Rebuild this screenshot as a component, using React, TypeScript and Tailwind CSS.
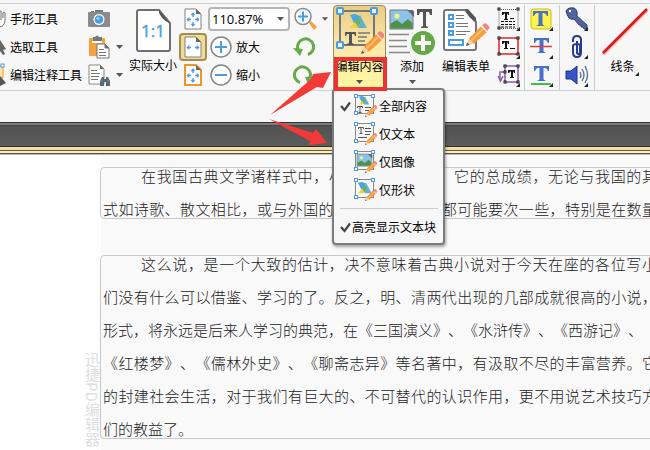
import type { ReactNode } from "react";
import { twMerge } from "tailwind-merge";

const BLUE = "#4a9be0";
const GREY = "#707070";

function Caret({ className = "" }: { className?: string }) {
  return (
    <svg viewBox="0 0 7 4" className={twMerge("w-[7px] h-1 shrink-0", className)}>
      <path d="M0 0h7L3.5 4z" fill="#555" />
    </svg>
  );
}

function Corner({ children }: { children: ReactNode }) {
  return (
    <svg viewBox="0 0 24 26" className="w-6 h-[26px]">
      {children}
      <path d="M23 21v4h-4z" fill="#222" />
    </svg>
  );
}

function Pencil() {
  return (
    <g>
      <path d="M0 20l2.5-6.5 4.5 4.5z" fill="#f3d3b0" />
      <path d="M0 20l1-3 2 2z" fill="#555" />
      <path d="M2.5 13.5L13 3l5 5L7 18z" fill="#f89b3c" />
      <path d="M4.5 15.5L15 5" stroke="#fdbb70" strokeWidth="1.6" />
      <path d="M14 2l2-1.6q1-.6 2 .2L20 3q1 1 0 2l-1.5 2z" fill="#f2837a" />
    </g>
  );
}

function Shapes() {
  return (
    <g>
      <path d="M0 1l5-1 5 2-1 6-5 1z" fill="#4aa5e0" />
      <path d="M10 1l7 13H8z" fill="#5bb3d9" />
      <path d="M0 14l6-7 4 3-3 4z" fill="#f2cf4a" />
      <path d="M5 8l4-4 2 3-3 6z" fill="#6fae55" />
    </g>
  );
}

function Picture() {
  return (
    <g>
      <path d="M0 0h18l5 5v14H0z" fill="#8bc4ea" stroke="#777" />
      <circle cx="7" cy="6" r="2.5" fill="#fff27a" />
      <path d="M.5 18.500v-5L7 10l5 4 6-5 4.500 4v5.500z" fill="#4f9149" />
      <path d="M17 0l7 7v-5q0-2-2-2z" fill="#666" />
    </g>
  );
}

function Handles() {
  return (
    <g fill="#fff" stroke={BLUE}>
      <rect x="2.500" y="2.500" width="18" height="18" fill="none" stroke="#888" />
      <rect x="1.500" y="1.500" width="3" height="3" />
      <rect x="18.500" y="1.500" width="3" height="3" />
      <rect x="1.500" y="18.500" width="3" height="3" />
    </g>
  );
}

function EditContentIcon() {
  return (
    <svg viewBox="0 0 48 50" className="w-12 h-[50px]">
      <g transform="translate(1 2)">
        <path d="M3 3h34v34H3z" fill="none" stroke="#777" strokeWidth="2" />
        <g fill="#e5f2fb" stroke={BLUE} strokeWidth="2">
          <rect x="0" y="0" width="6" height="6" rx="1" />
          <rect x="34" y="0" width="6" height="6" rx="1" />
          <rect x="0" y="34" width="6" height="6" rx="1" />
        </g>
        <g transform="translate(13 6)"><Shapes /></g>
        <path d="M8 24h11v4h-1l-1-2h-2v9l2 1v1h-7v-1l2-1v-9h-2l-1 2H8z" fill="#555" />
        <path d="M21 25h12M21 29h9M21 33h7" stroke="#777" strokeWidth="1.500" />
        <g transform="translate(24 23) scale(1.150)"><Pencil /></g>
      </g>
    </svg>
  );
}

function MenuIcon({ kind }: { kind: string }) {
  return (
    <svg viewBox="0 0 24 26" className="w-6 h-[26px]">
      <Handles />
      {kind === "all" && <g transform="translate(6 3) scale(.6)"><Shapes /></g>}
      {kind === "shape" && <g transform="translate(5 5) scale(.8)"><Shapes /></g>}
      {kind === "image" && <g transform="translate(4 5) scale(.64)"><Picture /></g>}
      {kind === "all" && (
        <path d="M4.500 15v-1.500h5V15M7 13.500V19M5.500 19.500h3M12 14.500h6M12 17.500h4" stroke="#555" fill="none" />
      )}
      {kind === "text" && (
        <path d="M5.500 8V6.500h5V8M8 6.500V12M6.500 12.500h3M12 7.500h6M12 10.500h6M12 13.500h5M5 16.500h9" stroke="#555" fill="none" />
      )}
      <g transform="translate(12 12) scale(.6)"><Pencil /></g>
    </svg>
  );
}

function PageArrows({ kind }: { kind: string }) {
  return (
    <svg viewBox="0 0 18 22" className="w-[18px] h-[22px]">
      <path d="M1 1h11l5 5v15H1z" fill="#fff" stroke={kind === "orange" ? "#ee9530" : "#808080"} strokeWidth={kind === "orange" ? 2 : 1} />
      <path d="M12 1v5h5z" fill="#666" />
      <g stroke={BLUE} strokeWidth="1.300" fill={BLUE}>
        <path d="M3 11.500h4M11 11.500h4" />
        <path d="M5 9.500v4l-2-2zM13 9.500v4l2-2z" strokeWidth=".5" />
        {kind !== "width" && (
          <>
            <path d="M9 5v4M9 14v4" />
            <path d="M7 7h4L9 4.500zM7 16h4l-2 2.500z" strokeWidth=".5" />
          </>
        )}
      </g>
    </svg>
  );
}

function RoundIcon({ plus }: { plus?: boolean }) {
  return (
    <svg viewBox="0 0 22 22" className="w-[22px] h-[22px]">
      <circle cx="11" cy="11" r="10" fill="#fdfdfd" stroke="#858585" strokeWidth="1.500" />
      <path d={plus ? "M5 11h12M11 5v12" : "M5 11h12"} stroke={BLUE} strokeWidth="2" />
    </svg>
  );
}

function Rotate({ flip }: { flip?: boolean }) {
  return (
    <svg viewBox="0 0 22 20" className="w-[22px] h-5">
      <g transform={flip ? "translate(22 0) scale(-1 1)" : undefined}>
        <path d="M15 17.500A8 8 0 1 0 5 12.500" fill="none" stroke="#68a948" strokeWidth="3" />
        <path d="M0 11l10 1-3 7z" fill="#68a948" />
      </g>
    </svg>
  );
}

function LeftTools() {
  const label = "flex items-center h-7 gap-1 whitespace-nowrap";
  return (
    <div className="w-[86px] shrink-0">
      <button className={label}>
        <svg viewBox="0 0 6 24" className="w-[6px] h-6">
          <path d="M-1 4h2v9M3 11V6q0-2 2 0v8q-1 6-6 6" fill="#fff" stroke={GREY} />
        </svg>
        手形工具
      </button>
      <button className={label}>
        <svg viewBox="0 0 6 24" className="w-[6px] h-6"><path d="M0 5l6 9-3 1 2 4-2 1-3-4z" fill="#666" /></svg>
        选取工具
      </button>
      <button className={label}>
        <svg viewBox="0 0 6 24" className="w-[6px] h-6">
          <path d="M0 3h3v12H0" fill="#ffe6a1" stroke="#ee9530" />
          <rect x="1" y="1" width="3" height="3" fill="#fff" stroke={BLUE} />
          <path d="M0 13l6 7-6 3z" fill="#555" />
        </svg>
        编辑注释工具
      </button>
    </div>
  );
}

function ClipTools() {
  return (
    <div className="w-[42px] shrink-0 pl-[2px]">
      <button aria-label="快照" className="flex items-center h-7">
        <svg viewBox="0 0 22 18" className="w-[22px] h-[18px]">
          <path d="M3 1h3v2H3zM7 0h8v4H7z" fill="#777" />
          <rect y="2" width="22" height="15" rx="1" fill="#8a8a8a" />
          <circle cx="11" cy="9.500" r="5.500" fill="#fff" />
          <circle cx="11" cy="9.500" r="4.300" fill={BLUE} />
          <circle cx="10" cy="8.500" r="1.800" fill="#8cc8f5" />
        </svg>
      </button>
      <button aria-label="粘贴" className="flex items-center h-7 gap-[6px]">
        <svg viewBox="0 0 22 24" className="w-[22px] h-6">
          <rect x="1" y="3" width="16" height="18" rx="1" fill="#f5a13d" />
          <path d="M5 2h2q2-3 4 0h3v4H5z" fill="#777" />
          <rect x="4" y="6" width="10" height="2" fill="#fff" />
          <path d="M9 9h8l4 4v10H9z" fill="#fff" stroke="#777" />
          <path d="M17 9v4h4zM11 14.500h5M11 17.500h7M11 20.500h7" stroke="#777" fill="#666" />
        </svg>
        <Caret />
      </button>
      <button aria-label="查找" className="flex items-center h-7 gap-[6px]">
        <svg viewBox="0 0 22 24" className="w-[22px] h-6">
          <path d="M1 2h11l4 4v15H1z" fill="#fff" stroke="#888" />
          <path d="M12 2v4h4z" fill="#666" />
          <path d="M3 7.500h6M3 10.500h9M3 13.500h8M3 16.500h7" stroke="#777" />
          <path d="M12 23v-5l2-4h2v2h2v-2h2l2 4v5h-4v-4h-2v4z" fill="#5b6670" />
          <path d="M13 18h2M19 18h2" stroke={BLUE} />
        </svg>
        <Caret />
      </button>
    </div>
  );
}

function ZoomTools() {
  return (
    <>
      <button className="w-[50px] shrink-0 flex flex-col items-center pt-1 gap-1 whitespace-nowrap">
        <svg viewBox="0 0 35 44" className="w-[35px] h-11">
          <path d="M3 1h20l11 13v26q0 2-2 2H3q-2 0-2-2V3q0-2 2-2z" fill="#fff" stroke="#707070" strokeWidth="2" />
          <path d="M23 1v3q4 8 11 10z" fill="#555" />
          <text x="17" y="28" textAnchor="middle" fontSize="17" fill={BLUE} stroke={BLUE} strokeWidth=".4" fontFamily="Open Sans, sans-serif">1:1</text>
        </svg>
        实际大小
      </button>
      <div className="w-[30px] shrink-0 flex flex-col items-center">
        <button aria-label="适合页面" className="flex items-center justify-center h-7"><PageArrows kind="page" /></button>
        <button aria-label="适合宽度" className="flex items-center justify-center h-7 w-7 border-2 border-[#a38d56] rounded-sm bg-[#f1dc91]"><PageArrows kind="width" /></button>
        <button aria-label="适合可见" className="flex items-center justify-center h-7"><PageArrows kind="orange" /></button>
      </div>
      <div className="w-[125px] shrink-0">
        <div className="flex items-center h-7 gap-1">
          <div className="relative flex items-center">
            <select aria-label="缩放比例" className="appearance-none w-[82px] h-6 pl-[2px] bg-white border-2 border-[#b5b5b5] rounded-sm text-[13px] leading-5 font-['Open_Sans',sans-serif]">
              <option>110.87%</option>
            </select>
            <Caret className="absolute right-[6px] pointer-events-none" />
          </div>
          <button aria-label="缩放" className="flex items-center gap-[5px]">
            <svg viewBox="0 0 23 24" className="w-[23px] h-6">
              <path d="M15 16l2-2 6 6-3 3z" fill="#f5a13d" />
              <circle cx="9" cy="9.500" r="8" fill="#f5fbff" stroke="#888" strokeWidth="1.500" />
              <path d="M4 9.500h10M9 4.500v10" stroke={BLUE} strokeWidth="2" />
            </svg>
            <Caret className="w-[6px]" />
          </button>
        </div>
        <div className="flex items-center h-7 pl-[2px]">
          <button className="flex items-center gap-1 w-[83px] whitespace-nowrap"><RoundIcon plus />放大</button>
          <button aria-label="逆时针旋转"><Rotate /></button>
        </div>
        <div className="flex items-center h-7 pl-[2px]">
          <button className="flex items-center gap-1 w-[83px] whitespace-nowrap"><RoundIcon />缩小</button>
          <button aria-label="顺时针旋转"><Rotate flip /></button>
        </div>
      </div>
    </>
  );
}

function Check() {
  return (
    <svg viewBox="0 0 11 11" className="w-[11px] h-[11px] shrink-0">
      <path d="M1 5l3.500 4L10 1.500" fill="none" stroke="#444" strokeWidth="2.200" />
    </svg>
  );
}

const menuItems = [
  { kind: "all", label: "全部内容", checked: true },
  { kind: "text", label: "仅文本" },
  { kind: "image", label: "仅图像" },
  { kind: "shape", label: "仅形状" },
];

function EditContent() {
  return (
    <div className="relative w-[53px] shrink-0">
      <button className="w-full h-[85px] flex flex-col items-center border border-[#9b8a58] rounded-t-sm bg-linear-to-b from-[#e9cd85] via-[#fbe9ac] to-[#fff6a0] whitespace-nowrap">
        <EditContentIcon />
        <span className="leading-5">编辑内容</span>
        <Caret className="mt-1" />
      </button>
      <div className="absolute z-20 left-px top-[52px] w-[53px] h-[34px] border-4 border-[#ee3232] pointer-events-none" />
      <div role="menu" className="absolute z-10 -left-px top-[83px] w-[113px] bg-[#f7f7f7] border-2 border-[#7b7b7b] rounded-sm py-[2px] shadow-[1px_2px_3px_rgba(0,0,0,0.35)]">
        {menuItems.map((item) => (
          <button key={item.kind} role="menuitem" className="flex items-center w-full h-7 pl-[6px] gap-[2px] whitespace-nowrap">
            <span className="w-[11px]">{item.checked && <Check />}</span>
            <MenuIcon kind={item.kind} />
            {item.label}
          </button>
        ))}
        <hr className="ml-[6px] mr-[5px] my-1 border-[#ccc]" />
        <button role="menuitem" className="flex items-center w-full h-7 pl-[6px] gap-px whitespace-nowrap">
          <Check />
          高亮显示文本块
        </button>
      </div>
    </div>
  );
}

function BigButtons() {
  return (
    <>
      <button className="w-[52px] shrink-0 flex flex-col items-center whitespace-nowrap">
        <svg viewBox="0 0 46 51" className="w-[46px] h-[51px]">
          <g transform="translate(1 5)"><Picture /></g>
          <path d="M28 4h15v6h-2l-1-3h-3v14l2 1v1h-7v-1l2-1V7h-3l-1 3h-2z" fill="#555" />
          <path d="M0 29.500h20M0 35.500h18M0 41.500h18M0 47.500h21" stroke="#888" strokeWidth="1.500" />
          <circle cx="34" cy="38" r="12" fill="#63aa45" />
          <path d="M26 38h16M34 30v16" stroke="#fff" strokeWidth="4" />
        </svg>
        <span className="leading-5">添加</span>
        <Caret className="mt-1" />
      </button>
      <button className="w-[56px] shrink-0 flex flex-col items-center whitespace-nowrap">
        <svg viewBox="0 0 48 51" className="w-12 h-[51px]">
          <path d="M4 5h19l11 12v26q0 2-2 2H4q-2 0-2-2V7q0-2 2-2z" fill="#fff" stroke="#777" strokeWidth="2" />
          <path d="M23 4q3 9 11 13v-4L26 4z" fill="#555" />
          <g fill="#fff" stroke={BLUE} strokeWidth="2">
            <rect x="7" y="10" width="4" height="4" />
            <rect x="7" y="18" width="4" height="4" />
            <rect x="7" y="26" width="4" height="4" />
            <rect x="7" y="35" width="14" height="5" />
          </g>
          <path d="M14 10.500h8M14 13.500h8M14 18.500h12M14 21.500h12M14 26.500h14M14 29.500h10" stroke="#777" />
          <g transform="translate(24 18) scale(1.150)"><Pencil /></g>
        </svg>
        <span className="leading-5">编辑表单</span>
      </button>
    </>
  );
}

function SmallT({ x = 5, y = 5 }: { x?: number; y?: number }) {
  return <path transform={`translate(${x} ${y})`} d="M0 0h7v3H6L5 1v6h1v1H2V7h1V1L1 3H0z" fill="#111" />;
}

function Dots({ pts }: { pts: number[][] }) {
  return (
    <g fill="#fff" stroke="#111">
      {pts.map(([x, y]) => <rect key={x + "," + y} x={x - 1} y={y - 1} width="2" height="2" />)}
    </g>
  );
}

function BlueT({ small }: { small?: boolean }) {
  return (
    <path
      transform={small ? "translate(4 4)" : "translate(3 3)"}
      d="M0 0h15v5h-1q-1-3-3-3H9.500v11q0 1 2 1.500V15h-8v-.5q2-.5 2-1.500V2H4Q2 2 1 5H0z"
      fill="#4671c9"
    />
  );
}

const col = "shrink-0 flex flex-col items-center";
const cell = "flex items-center justify-center h-7";

function Markup() {
  return (
    <>
      <div className={twMerge(col, "w-[30px]")}>
        <button aria-label="文本框" className={cell}>
          <Corner>
            <path d="M2 3.500h19v19H2z" fill="none" stroke="#555" strokeDasharray="1 1" />
            <SmallT y={6} />
            <g fill="none" stroke="#111">
              <path d="M4 15.500h14M4 18.500h14M4 21h14" strokeDasharray="3 1" />
              <path d="M13 12.500h4" />
            </g>
            <Dots pts={[[2, 3], [21, 3], [2, 22]]} />
          </Corner>
        </button>
        <button aria-label="打字机" className={cell}>
          <Corner>
            <path d="M2 4h19v16H2z" fill="#fff" stroke="#e02222" strokeWidth="1.500" />
            <SmallT y={7} />
            <path d="M13 14.500h5" stroke="#111" />
            <Dots pts={[[2, 4], [21, 4], [2, 20], [21, 20]]} />
          </Corner>
        </button>
        <button aria-label="标注" className={cell}>
          <Corner>
            <path d="M8 4h13v16H8zM8 10H3v8" fill="#fff" stroke="#8b5aa5" strokeWidth="1.500" />
            <path d="M1 14l2.500 5L6 14" fill="none" stroke="#8b5aa5" strokeWidth="1.500" />
            <SmallT x={11} y={8} />
            <Dots pts={[[8, 4], [21, 4], [8, 20], [21, 20], [8, 10]]} />
          </Corner>
        </button>
      </div>
      <div className="shrink-0 w-px bg-[#ccc]" />
      <div className={twMerge(col, "w-[34px]")}>
        <button aria-label="高亮" className={cell}>
          <Corner>
            <rect x="1" y="3" width="20" height="20" rx="3" fill="#fff64d" stroke="#cdbb14" />
            <g transform="translate(0 2)"><BlueT /></g>
          </Corner>
        </button>
        <button aria-label="删除线" className={cell}>
          <Corner><BlueT small /><path d="M0 12.500h22" stroke="#ed3838" strokeWidth="1.500" /></Corner>
        </button>
        <button aria-label="下划线" className={cell}>
          <Corner><BlueT small /><path d="M1 22h20" stroke="#40bd45" strokeWidth="2" /></Corner>
        </button>
      </div>
      <div className="shrink-0 w-px bg-[#ccc]" />
      <div className={twMerge(col, "w-[34px]")}>
        <button aria-label="密钥" className={cell}>
          <Corner>
            <path d="M1 5q2-4 8-3 4 2 3 8l10 9v4h-3l-1-2-2 0 0-2-2 0-5-6q-3 1-5-1-2-3-3-7z" fill="#52649f" stroke="#303c72" />
            <circle cx="5" cy="5" r="1.200" fill="#fff" />
          </Corner>
        </button>
        <button aria-label="附件" className={cell}>
          <Corner>
            <path d="M8 8V6q0-4 4-4t4 4v12q0 5-4 5t-4-5v-6q0-2 4-2t3 3v6q-2 2-3 0V7" fill="none" stroke="#263b91" strokeWidth="2" />
          </Corner>
        </button>
        <button aria-label="声音" className={cell}>
          <Corner>
            <path d="M1 9h5l6-5v18l-6-5H1z" fill="#3a55c4" stroke="#22338c" />
            <path d="M15 10q2 3 0 6M17 7q4 6 0 12M20 4q5 9 0 17" fill="none" stroke="#59688f" strokeWidth="1.300" />
          </Corner>
        </button>
      </div>
      <div className="shrink-0 w-px bg-[#ccc]" />
      <button className="w-[59px] shrink-0 flex flex-col items-center pt-[2px] whitespace-nowrap">
        <svg viewBox="0 0 46 49" className="w-[46px] h-[49px]">
          <path d="M1 47L45 3" stroke="#f3b9a0" strokeWidth="4" />
          <path d="M1 46L45 2" stroke="#dc1723" strokeWidth="2.500" />
        </svg>
        <span className="flex items-end leading-5">
          线条
          <svg viewBox="0 0 4 4" className="w-1 h-1"><path d="M4 0v4H0z" fill="#222" /></svg>
        </span>
      </button>
    </>
  );
}

// line breaks follow the printed page, so every line is justified on its own
const paragraphs = [
  [
    "在我国古典文学诸样式中，小说是比较晚的，它的总成绩，无论与我国的其",
    "式如诗歌、散文相比，或与外国的同类作品相比，都可能要次一些，特别是在数量",
  ],
  [
    "这么说，是一个大致的估计，决不意味着古典小说对于今天在座的各位写小",
    "们没有什么可以借鉴、学习的了。反之，明、清两代出现的几部成就很高的小说，",
    "形式，将永远是后来人学习的典范，在《三国演义》、《水浒传》、《西游记》、《",
    "《红楼梦》、《儒林外史》、《聊斋志异》等名著中，有汲取不尽的丰富营养。它",
    "的封建社会生活，对于我们有巨大的、不可替代的认识作用，更不用说艺术技巧方",
    "们的教益了。",
  ],
];

function Page() {
  return (
    <main className="relative flex bg-white overflow-hidden">
      <div className="w-[101px] shrink-0" />
      <article className="grow min-w-0 -mr-2 bg-[#f9f9fa] pt-3 pb-4">
        {paragraphs.map((lines, i) => (
          <div key={i} className="-ml-px mb-9 last:mb-0 border border-[#c8c8c8] rounded-sm pl-[2px]">
            <p className="-mt-[9px] -mb-[7px] text-[15px] leading-[33px] font-light text-[#222] whitespace-nowrap [text-spacing-trim:space-all]">
              {lines.map((line, n) => (
                <span
                  key={n}
                  className={twMerge(
                    "block text-justify [text-align-last:justify]",
                    n === 0 && "pl-[38px]",
                    line.length < 10 && "[text-align-last:left]"
                  )}
                >
                  {line}
                </span>
              ))}
            </p>
          </div>
        ))}
      </article>
      <span className="absolute left-[84px] bottom-2 text-[15px] leading-4 text-[#dedede] [writing-mode:vertical-rl]">
        迅捷PD编辑器
      </span>
    </main>
  );
}

export default function App() {
  return (
    <div className="relative min-h-screen overflow-hidden bg-white text-xs text-black font-['Noto_Sans_CJK_SC',sans-serif]">
      <header className="bg-[#f7f7f7] pt-[3px] pb-[31px]">
        <div className="flex border-y border-[#d0d0d0] pt-px h-[88px]">
          <LeftTools />
          <ClipTools />
          <ZoomTools />
          <EditContent />
          <BigButtons />
          <Markup />
        </div>
      </header>
      <div className="h-6 bg-linear-to-b from-[#505050] to-[#5c5c5c] shadow-[inset_0_1px_0_#333,inset_0_3px_0_#7c7c7c,inset_0_4px_0_#444]" />
      <div className="flex flex-col">
        <div className="h-px bg-[#33301f]" />
        <div className="h-[3px] bg-[#ecdfb4]" />
        <div className="h-px bg-[#6b5a2c]" />
        <div className="h-[2px] bg-[#f8efcb]" />
        <div className="h-px bg-[#5d522c]" />
        <div className="h-px bg-[#bdbcb5]" />
      </div>
      <Page />
      <svg viewBox="0 0 70 80" className="absolute z-30 left-[265px] top-[68px] w-[70px] h-20 pointer-events-none">
        <path d="M5 47l41-36 2-5 18-2-8 16-6-1z" fill="#f33a38" />
        <path d="M4 51l44 14 3-4 11 14-18 2 1-4z" fill="#f33a38" />
      </svg>
    </div>
  );
}
